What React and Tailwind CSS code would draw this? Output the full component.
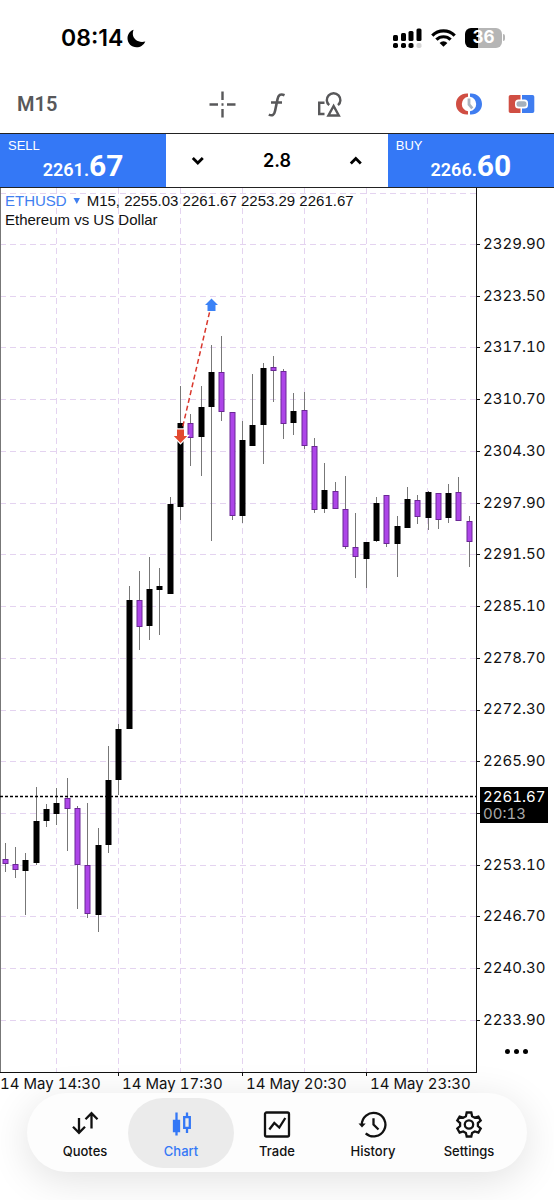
import { useState } from "react";

// [high, body top, body bottom, low, direction], in plot units
const candles = [
  [655, 671, 676, 684, "down"],
  [659, 676, 682, 690, "down"],
  [665, 672, 683, 727, "up"],
  [599, 633, 675, 677, "up"],
  [616, 621, 633, 639, "up"],
  [600, 615, 626, 637, "up"],
  [590, 610, 621, 663, "down"],
  [618, 620, 677, 721, "down"],
  [615, 677, 726, 730, "down"],
  [640, 657, 727, 744, "up"],
  [558, 592, 657, 665, "up"],
  [536, 541, 592, 607, "up"],
  [398, 412, 541, 541, "up"],
  [383, 412, 439, 462, "down"],
  [369, 401, 438, 452, "up"],
  [380, 398, 402, 447, "up"],
  [309, 316, 406, 406, "up"],
  [198, 235, 319, 332, "up"],
  [226, 235, 250, 278, "down"],
  [198, 219, 249, 288, "up"],
  [157, 184, 219, 353, "up"],
  [148, 184, 224, 233, "down"],
  [224, 224, 328, 332, "down"],
  [233, 252, 328, 335, "up"],
  [186, 237, 258, 258, "up"],
  [175, 180, 237, 276, "up"],
  [168, 179, 183, 214, "down"],
  [181, 183, 236, 251, "down"],
  [205, 223, 235, 247, "up"],
  [204, 222, 258, 261, "down"],
  [250, 258, 322, 325, "down"],
  [275, 302, 321, 325, "up"],
  [294, 303, 321, 321, "down"],
  [288, 321, 359, 361, "down"],
  [325, 359, 369, 390, "down"],
  [354, 354, 371, 400, "up"],
  [309, 315, 353, 354, "up"],
  [307, 307, 356, 359, "down"],
  [328, 338, 356, 389, "up"],
  [299, 311, 340, 340, "up"],
  [307, 312, 329, 336, "down"],
  [303, 304, 330, 342, "up"],
  [305, 305, 332, 341, "down"],
  [296, 305, 330, 335, "up"],
  [289, 304, 333, 333, "down"],
  [328, 333, 354, 379, "down"],
];

// the 2259.50 level sits under the current price tag
const prices = [
  "2329.90", "2323.50", "2317.10", "2310.70", "2304.30", "2297.90", "2291.50", "2285.10",
  "2278.70", "2272.30", "2265.90", "", "2253.10", "2246.70", "2240.30", "2233.90",
];

const gridX = [56.5, 118.5, 180.5, 242.5, 304.5, 366.5, 427.5];
const gridY = [5, ...prices.map((_, i) => 56.5 + i * 51.73)];

function StatusBar() {
  return (
    <div className="flex h-[75px] items-center justify-between pl-[61px] pr-[49px]">
      <div className="flex items-center gap-1 pt-px text-[23px] font-semibold leading-none text-black">
        <span>08:14</span>
        <svg className="size-[19px]" viewBox="0 0 19 19">
          <path d="M6.600 0.800C2.800 2.200.5 5.400.5 9.200c0 5 3.900 9 9 9 4 0 7.300-2.300 8.800-5.800-5.900 1.800-12.200-1.500-12.500-7.400 0-1.500.2-2.900.8-4.200z" />
        </svg>
      </div>
      <div className="flex items-center gap-[9px]">
        <svg className="h-5 w-[29px]" viewBox="0 0 29 20">
          <rect x="0" y="7" width="5" height="6" rx="1.5" />
          <rect x="8" y="5" width="5" height="8" rx="1.5" />
          <rect x="15.500" y="3" width="5" height="10" rx="1.5" />
          <rect x="23.500" y="0.500" width="5" height="12.500" rx="1.5" />
          <rect x="0" y="15" width="5" height="5" rx="1.8" />
          <rect x="8" y="15" width="5" height="5" rx="1.8" />
          <rect x="15.500" y="15" width="5" height="5" rx="1.8" />
          <rect x="23.500" y="15" width="5" height="5" rx="1.8" fill="#d4d4d4" />
        </svg>
        <svg className="h-[18px] w-[25px]" viewBox="0 0 25 18">
          <g fill="none" stroke="#000" strokeWidth="3.2">
            <path d="M1.300 6.600a15.800 15.800 0 0 1 22.400 0" />
            <path d="M5.400 10.700a10 10 0 0 1 14.200 0" />
          </g>
          <path d="M12.500 17.800l-3.900-3.900a5.600 5.600 0 0 1 7.800 0z" />
        </svg>
        <div className="flex items-center gap-px">
          <div className="flex h-5 w-[37px] items-center justify-center rounded-md bg-linear-to-r from-black from-36% to-[#b5b5b5] to-36% text-[17px] font-bold leading-none text-white">
            36
          </div>
          <div className="h-[7px] w-0.5 rounded-r bg-[#b5b5b5]" />
        </div>
      </div>
    </div>
  );
}

function Toolbar() {
  return (
    <div className="flex h-[58px] items-center justify-between pl-[17px] pr-[19px] text-[#58585a]">
      <button className="w-[74px] text-left font-[Roboto,sans-serif] text-xl font-semibold">M15</button>
      <div className="flex items-center gap-[27px] pl-[6px]">
        <button aria-label="Crosshair">
          <svg className="size-[27px]" viewBox="0 0 27 27" fill="none" stroke="currentColor" strokeWidth="2.4">
            <path d="M13.500 0.500v8.500M13.500 18v8.500M0.500 13.500H9M18 13.500h8.500M12.500 13.500h2" />
          </svg>
        </button>
        <button aria-label="Indicators">
          <svg className="size-[27px]" viewBox="0 0 27 27" fill="none" stroke="currentColor" strokeWidth="2.6">
            <path d="M21.500 4.200c-4-1.800-6.200-.2-7 4l-2.400 11.600c-.8 4.200-2.800 5.400-6.300 3.800M8 11.500h11" />
          </svg>
        </button>
        <button aria-label="Objects">
          <svg className="size-[27px]" viewBox="0 0 27 27" fill="none" stroke="currentColor" strokeWidth="2.400">
            <path d="M7.500 11.700H2.200v11.300h5.300" />
            <path d="M12.200 14.200a6.800 6.800 0 1 1 8.800 0" />
            <path d="M16.600 15l-5.200 9.500h10.400z" />
          </svg>
        </button>
      </div>
      <div className="flex items-center gap-[25px]">
        <button aria-label="Order history">
          <svg className="h-6 w-7" viewBox="0 0 28 24">
            <path d="M13 1.500C6.500.8 1 5.500 1 12s5.500 11.200 12 10.500v-3.200a7.400 7.400 0 0 1 0-14.600z" fill="#d04e43" />
            <path d="M15 1.500C21.500.8 27 5.500 27 12s-5.500 11.200-12 10.500v-3.200a7.400 7.400 0 0 0 0-14.600z" fill="#3f7df0" />
            <path d="M14 6.500v6l3.300 3.800" fill="none" stroke="#aab4bf" strokeWidth="2.800" />
          </svg>
        </button>
        <button aria-label="One click trading">
          <svg className="h-5 w-[27px]" viewBox="0 0 27 20">
            <path d="M2.500 1h10v18h-10A1.800 1.800 0 0 1 .7 17.200V2.800A1.800 1.800 0 0 1 2.500 1z" fill="#d04e43" />
            <path d="M14 1h10.500a1.800 1.800 0 0 1 1.800 1.800v14.400a1.800 1.800 0 0 1-1.800 1.800H14z" fill="#3f7df0" />
            <rect x="7" y="5.500" width="13" height="9" rx="3.500" fill="#fff" />
            <rect x="8.500" y="7.200" width="10" height="5.600" rx="2.500" fill="#a5b0bc" />
          </svg>
        </button>
      </div>
    </div>
  );
}

function PriceButton({ label, whole, cents }) {
  return (
    <button className="flex flex-col bg-[#3478f6] px-2 pt-1 text-left text-white">
      <span className="font-['Liberation_Sans',sans-serif] text-[13px] leading-4">{label}</span>
      <span className="-mt-1 self-center font-[Roboto,sans-serif] leading-8">
        <span className="text-lg font-semibold leading-8">{whole}.</span>
        <span className="text-3xl font-bold leading-8">{cents}</span>
      </span>
    </button>
  );
}

function TradeBar() {
  const [volume, setVolume] = useState("2.8");

  const step = (delta) => {
    setVolume((Number(volume) + delta).toFixed(1));
  };

  return (
    <div className="grid h-[55px] grid-cols-[3fr_4fr_3fr] border-y border-[#222]">
      <PriceButton label="SELL" whole="2261" cents="67" />
      <div className="flex items-center justify-between px-6 text-black">
        <button aria-label="Decrease volume" onClick={() => step(-0.1)}>
          <svg className="size-4" viewBox="0 0 16 16" fill="none" stroke="currentColor" strokeWidth="2.800">
            <path d="M2.800 5l5 5 5-5" />
          </svg>
        </button>
        <input
          aria-label="Volume"
          value={volume}
          onChange={(e) => setVolume(e.target.value)}
          className="w-20 text-center text-lg font-semibold outline-none"
        />
        <button aria-label="Increase volume" onClick={() => step(0.1)}>
          <svg className="size-4" viewBox="0 0 16 16" fill="none" stroke="currentColor" strokeWidth="2.800">
            <path d="M2.800 10.500l5-5 5 5" />
          </svg>
        </button>
      </div>
      <PriceButton label="BUY" whole="2266" cents="60" />
    </div>
  );
}

function Candle({ x, candle }) {
  const [high, top, bottom, low, dir] = candle;
  return (
    <g>
      <line x1={x} x2={x} y1={high} y2={low} stroke="#777" strokeWidth="1" />
      {dir === "up" ? (
        <rect x={x - 3} y={top} width="6" height={bottom - top} fill="#000" />
      ) : (
        <rect x={x - 2.5} y={top + 0.5} width="5" height={bottom - top - 1} fill="#ad45e8" stroke="#6b2896" />
      )}
    </g>
  );
}

function Plot() {
  return (
    <svg className="block w-full" viewBox="0 0 480 889" role="img" aria-label="ETHUSD candlestick chart">
      <g stroke="#e4d3f0" strokeWidth="1" strokeDasharray="6 4">
        {gridX.map((x) => (
          <line key={x} x1={x} x2={x} y1="0" y2="884" />
        ))}
        {gridY.map((y) => (
          <line key={y} x1="0" x2="476" y1={Math.floor(y) + 0.5} y2={Math.floor(y) + 0.5} />
        ))}
      </g>

      <line x1="0.500" x2="0.500" y1="0" y2="884" stroke="#777" />
      <path d="M476.500 0v884.500M0 884.500h477M118.500 884v4M242.500 884v4M366.500 884v4" fill="none" stroke="#111" />
      {gridY.slice(1).map((y) => (
        <line key={y} x1="477" x2="480" y1={Math.floor(y) + 0.5} y2={Math.floor(y) + 0.5} stroke="#111" />
      ))}

      {candles.map((candle, i) => (
        <Candle key={i} x={Math.round(i * 10.31 + 4.8) + 0.5} candle={candle} />
      ))}

      <line x1="0" x2="476" y1="608.500" y2="608.500" stroke="#000" strokeWidth="1.300" strokeDasharray="3 2" />

      {/* Closed position: entry and exit markers */}
      <line x1="181" y1="246" x2="211" y2="118" stroke="#d9372c" strokeWidth="1.500" strokeDasharray="5 3" />
      <path d="M177 241.500h7v6.500h3.200l-6.700 7-6.700-7h3.200z" fill="#e2492f" stroke="#fff" strokeWidth="2.400" paintOrder="stroke" />
      <path d="M211.500 110.500l6.500 6.500h-2.500v6h-8v-6H205z" fill="#3b82f6" />
    </svg>
  );
}

function Chart() {
  return (
    <div>
      <div className="relative flex">
        <div className="min-w-0 flex-1">
          <Plot />
        </div>
        <div className="relative flex w-[74px] shrink-0 flex-col justify-between pb-[47px] pl-[3px] pt-[46px] text-[15px] tabular-nums leading-5 text-[#111]">
          {prices.map((price, i) => (
            <span key={i} className="h-5">{price}</span>
          ))}
          <div className="absolute left-0 top-[67.4%] w-[68px] bg-black py-px pl-[3px] leading-[17px] text-white">
            <div>2261.67</div>
            <div className="text-[#aaa]">00:13</div>
          </div>
          <button aria-label="More" className="absolute bottom-[22px] left-6 flex gap-1 p-px">
            <span className="size-[5px] rounded-full bg-black" />
            <span className="size-[5px] rounded-full bg-black" />
            <span className="size-[5px] rounded-full bg-black" />
          </button>
        </div>
        <div className="absolute left-[5px] top-[3px] font-['Liberation_Sans',sans-serif] text-[15px] leading-[19px] text-[#111]">
          <div className="flex items-center">
            <button className="flex items-center gap-1.5 text-[#3f7ff0]">
              ETHUSD
              <svg className="size-2" viewBox="0 0 8 8">
                <path d="M0.500 1h6.500L3.800 7z" fill="currentColor" />
              </svg>
            </button>
            <span className="ml-1.5">M15, 2255.03 2261.67 2253.29 2261.67</span>
          </div>
          <div>Ethereum vs US Dollar</div>
        </div>
      </div>
      <div className="grid grid-cols-[118fr_124fr_124fr_188fr] whitespace-nowrap text-[15px] tabular-nums leading-[14px] text-[#111]">
        <span>14 May 14:30</span>
        <span className="pl-1">14 May 17:30</span>
        <span className="pl-1">14 May 20:30</span>
        <span className="pl-1">14 May 23:30</span>
      </div>
    </div>
  );
}

const tabs = [
  {
    name: "Quotes",
    icon: <path d="M8 8v14.500M2 16.800l6 6 6-6M20.500 18.500V3.500M14.500 9.200l6-6 6 6" />,
  },
  {
    name: "Chart",
    icon: (
      <>
        <path d="M9.500 2.500v23M20 2.500v3.500M20 18.500v4.500" />
        <path d="M7 11h5v10H7z" fill="currentColor" />
        <path d="M17.200 7.200h5.600v10.600h-5.600z" />
      </>
    ),
  },
  {
    name: "Trade",
    icon: (
      <>
        <rect x="2" y="2.500" width="24" height="24" rx="1.500" />
        <path d="M6.300 19.500l5-6.500 5 4.500 6-9.500" />
      </>
    ),
  },
  {
    name: "History",
    icon: (
      <>
        <path d="M2.800 15A11.800 11.800 0 1 1 6.700 23.400" />
        <path d="M14.500 8.300v6.200l5 5" />
        <path d="M-0.500 13.500h7.200l-3.700 4z" fill="currentColor" stroke="none" />
      </>
    ),
  },
  {
    name: "Settings",
    icon: (
      <>
        <path d="M11.700 2.500h4.600l.8 3.700 2.700 1.500 3.600-1.100 2.300 4-2.800 2.500v3l2.800 2.500-2.300 4-3.600-1.100-2.700 1.500-.8 3.500h-4.600l-.8-3.500-2.700-1.500-3.600 1.100-2.300-4 2.800-2.500v-3l-2.800-2.500 2.300-4 3.600 1.100 2.700-1.500z" />
        <circle cx="14" cy="14.500" r="4.200" />
      </>
    ),
  },
];

function TabBar() {
  const [active, setActive] = useState("Chart");

  return (
    <nav className="mx-[27px] mt-0.5 flex h-[79px] items-center rounded-full bg-[#fdfdfd] px-[10px] shadow-[0_8px_40px_rgba(0,0,0,0.12)]">
      {tabs.map((tab) => (
        <button
          key={tab.name}
          onClick={() => setActive(tab.name)}
          className={
            "-mx-[5px] flex h-[70px] flex-1 flex-col items-center gap-1 rounded-full pt-3 text-[13px] font-medium leading-4 " +
            (active === tab.name ? "bg-[#ebebeb] text-[#3478f6]" : "text-[#111]")
          }
        >
          <svg className="size-[29px] overflow-visible" viewBox="0 0 29 29" fill="none" stroke="currentColor" strokeWidth="2.300">
            {tab.icon}
          </svg>
          {tab.name}
        </button>
      ))}
    </nav>
  );
}

export default function App() {
  return (
    <div className="min-h-screen overflow-hidden bg-white pb-7 font-['Inter',sans-serif]">
      <StatusBar />
      <Toolbar />
      <TradeBar />
      <Chart />
      <TabBar />
    </div>
  );
}
